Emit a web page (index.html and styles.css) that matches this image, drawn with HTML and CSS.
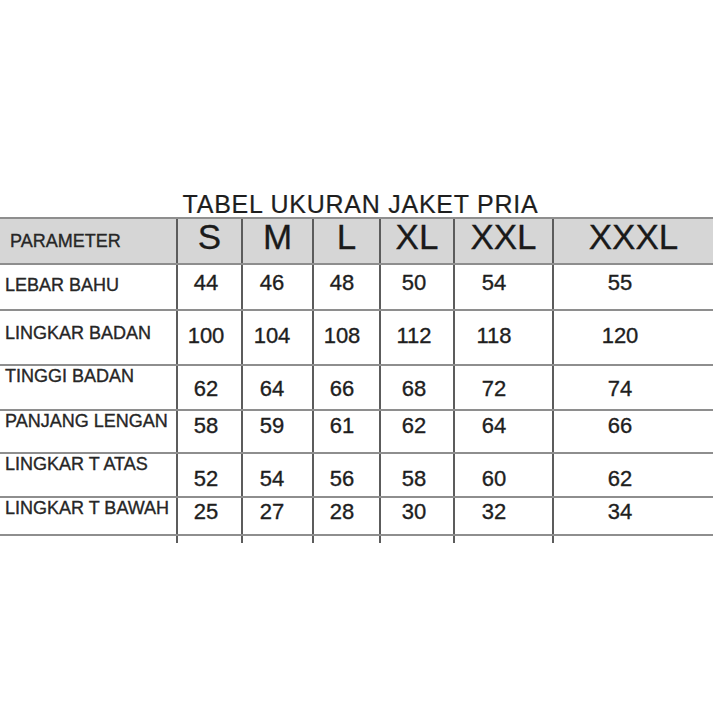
FILE: index.html
```html
<!DOCTYPE html>
<html lang="id">
<head>
<meta charset="utf-8">
<title>Tabel Ukuran Jaket Pria</title>
<link rel="stylesheet" href="styles.css">
</head>
<body>
<main class="page">
  <h1 class="title">TABEL UKURAN JAKET PRIA</h1>
  <div class="chart">
    <div class="row head">
      <div class="cell label">PARAMETER</div>
      <div class="cell size">S</div>
      <div class="cell size">M</div>
      <div class="cell size">L</div>
      <div class="cell size">XL</div>
      <div class="cell size">XXL</div>
      <div class="cell size">XXXL</div>
    </div>
    <div class="row r1">
      <div class="cell label">LEBAR BAHU</div>
      <div class="cell num">44</div><div class="cell num">46</div><div class="cell num">48</div><div class="cell num">50</div><div class="cell num">54</div><div class="cell num">55</div>
    </div>
    <div class="row r2">
      <div class="cell label">LINGKAR BADAN</div>
      <div class="cell num">100</div><div class="cell num">104</div><div class="cell num">108</div><div class="cell num">112</div><div class="cell num">118</div><div class="cell num">120</div>
    </div>
    <div class="row r3">
      <div class="cell label">TINGGI BADAN</div>
      <div class="cell num">62</div><div class="cell num">64</div><div class="cell num">66</div><div class="cell num">68</div><div class="cell num">72</div><div class="cell num">74</div>
    </div>
    <div class="row r4">
      <div class="cell label">PANJANG LENGAN</div>
      <div class="cell num">58</div><div class="cell num">59</div><div class="cell num">61</div><div class="cell num">62</div><div class="cell num">64</div><div class="cell num">66</div>
    </div>
    <div class="row r5">
      <div class="cell label">LINGKAR T ATAS</div>
      <div class="cell num">52</div><div class="cell num">54</div><div class="cell num">56</div><div class="cell num">58</div><div class="cell num">60</div><div class="cell num">62</div>
    </div>
    <div class="row r6">
      <div class="cell label">LINGKAR T BAWAH</div>
      <div class="cell num">25</div><div class="cell num">27</div><div class="cell num">28</div><div class="cell num">30</div><div class="cell num">32</div><div class="cell num">34</div>
    </div>
    <div class="row stub">
      <div class="cell"></div><div class="cell"></div><div class="cell"></div><div class="cell"></div><div class="cell"></div><div class="cell"></div><div class="cell"></div>
    </div>
  </div>
</main>
</body>
</html>
```
FILE: styles.css
```css
html, body {
  margin: 0;
  padding: 0;
  background: #ffffff;
}
body {
  font-family: "Liberation Sans", Arial, sans-serif;
  color: #262626;
  width: 713px;
  height: 713px;
  overflow: hidden;
}
.page {
  padding-top: 191px;
}
.title {
  margin: 0;
  padding-left: 8px;
  font-size: 25px;
  font-weight: normal;
  letter-spacing: 0.75px;
  line-height: 26px;
  text-align: center;
  color: #1e1e1e;
  -webkit-text-stroke: 0.2px #1e1e1e;
}
.chart {
  display: flex;
  flex-direction: column;
}
.row {
  display: grid;
  grid-template-columns: 176px 65px 71px 67px 74px 99px 1fr;
  box-sizing: border-box;
  border-bottom: 2px solid #8e8e8e;
}
.cell {
  box-sizing: border-box;
  border-left: 2px solid #5c5c5c;
}
.cell:first-child {
  border-left: none;
}
.head {
  height: 48px;
  border-top: 2px solid #8e8e8e;
  background: #d6d6d6;
}
.r1 { height: 46px; }
.r2 { height: 55px; }
.r3 { height: 45px; }
.r4 { height: 43px; }
.r5 { height: 44px; }
.r6 { height: 38px; }
.stub {
  height: 7px;
  border-bottom: none;
}

.label {
  font-size: 18px;
  line-height: 18px;
  padding-left: 5px;
  color: #262626;
  white-space: nowrap;
  -webkit-text-stroke: 0.35px #262626;
}
.head .label {
  padding-left: 10px;
  padding-top: 13px;
}
.size {
  font-size: 35px;
  line-height: 36px;
  text-align: center;
  color: #1a1a1a;
  -webkit-text-stroke: 0.3px #1a1a1a;
}
.num {
  font-size: 22px;
  line-height: 22px;
  text-align: center;
  color: #1e1e1e;
  -webkit-text-stroke: 0.35px #1e1e1e;
}
.num:nth-child(2) { padding-right: 7px; }
.num:nth-child(3) { padding-right: 11px; }
.num:nth-child(4) { padding-right: 9px; }
.num:nth-child(5) { padding-right: 6px; }
.num:nth-child(6) { padding-right: 19px; }
.num:nth-child(7) { padding-right: 27px; }

.r1 .label { padding-top: 11px; }
.r1 .num { padding-top: 7px; }
.r2 .label { padding-top: 13px; }
.r2 .num { padding-top: 14px; }
.r3 .label { padding-top: 1px; }
.r3 .num { padding-top: 12px; }
.r4 .label { padding-top: 1px; }
.r4 .num { padding-top: 4px; }
.r5 .label { padding-top: 1px; }
.r5 .num { padding-top: 14px; }
.r6 .label { padding-top: 1px; }
.r6 .num { padding-top: 3px; }
```
